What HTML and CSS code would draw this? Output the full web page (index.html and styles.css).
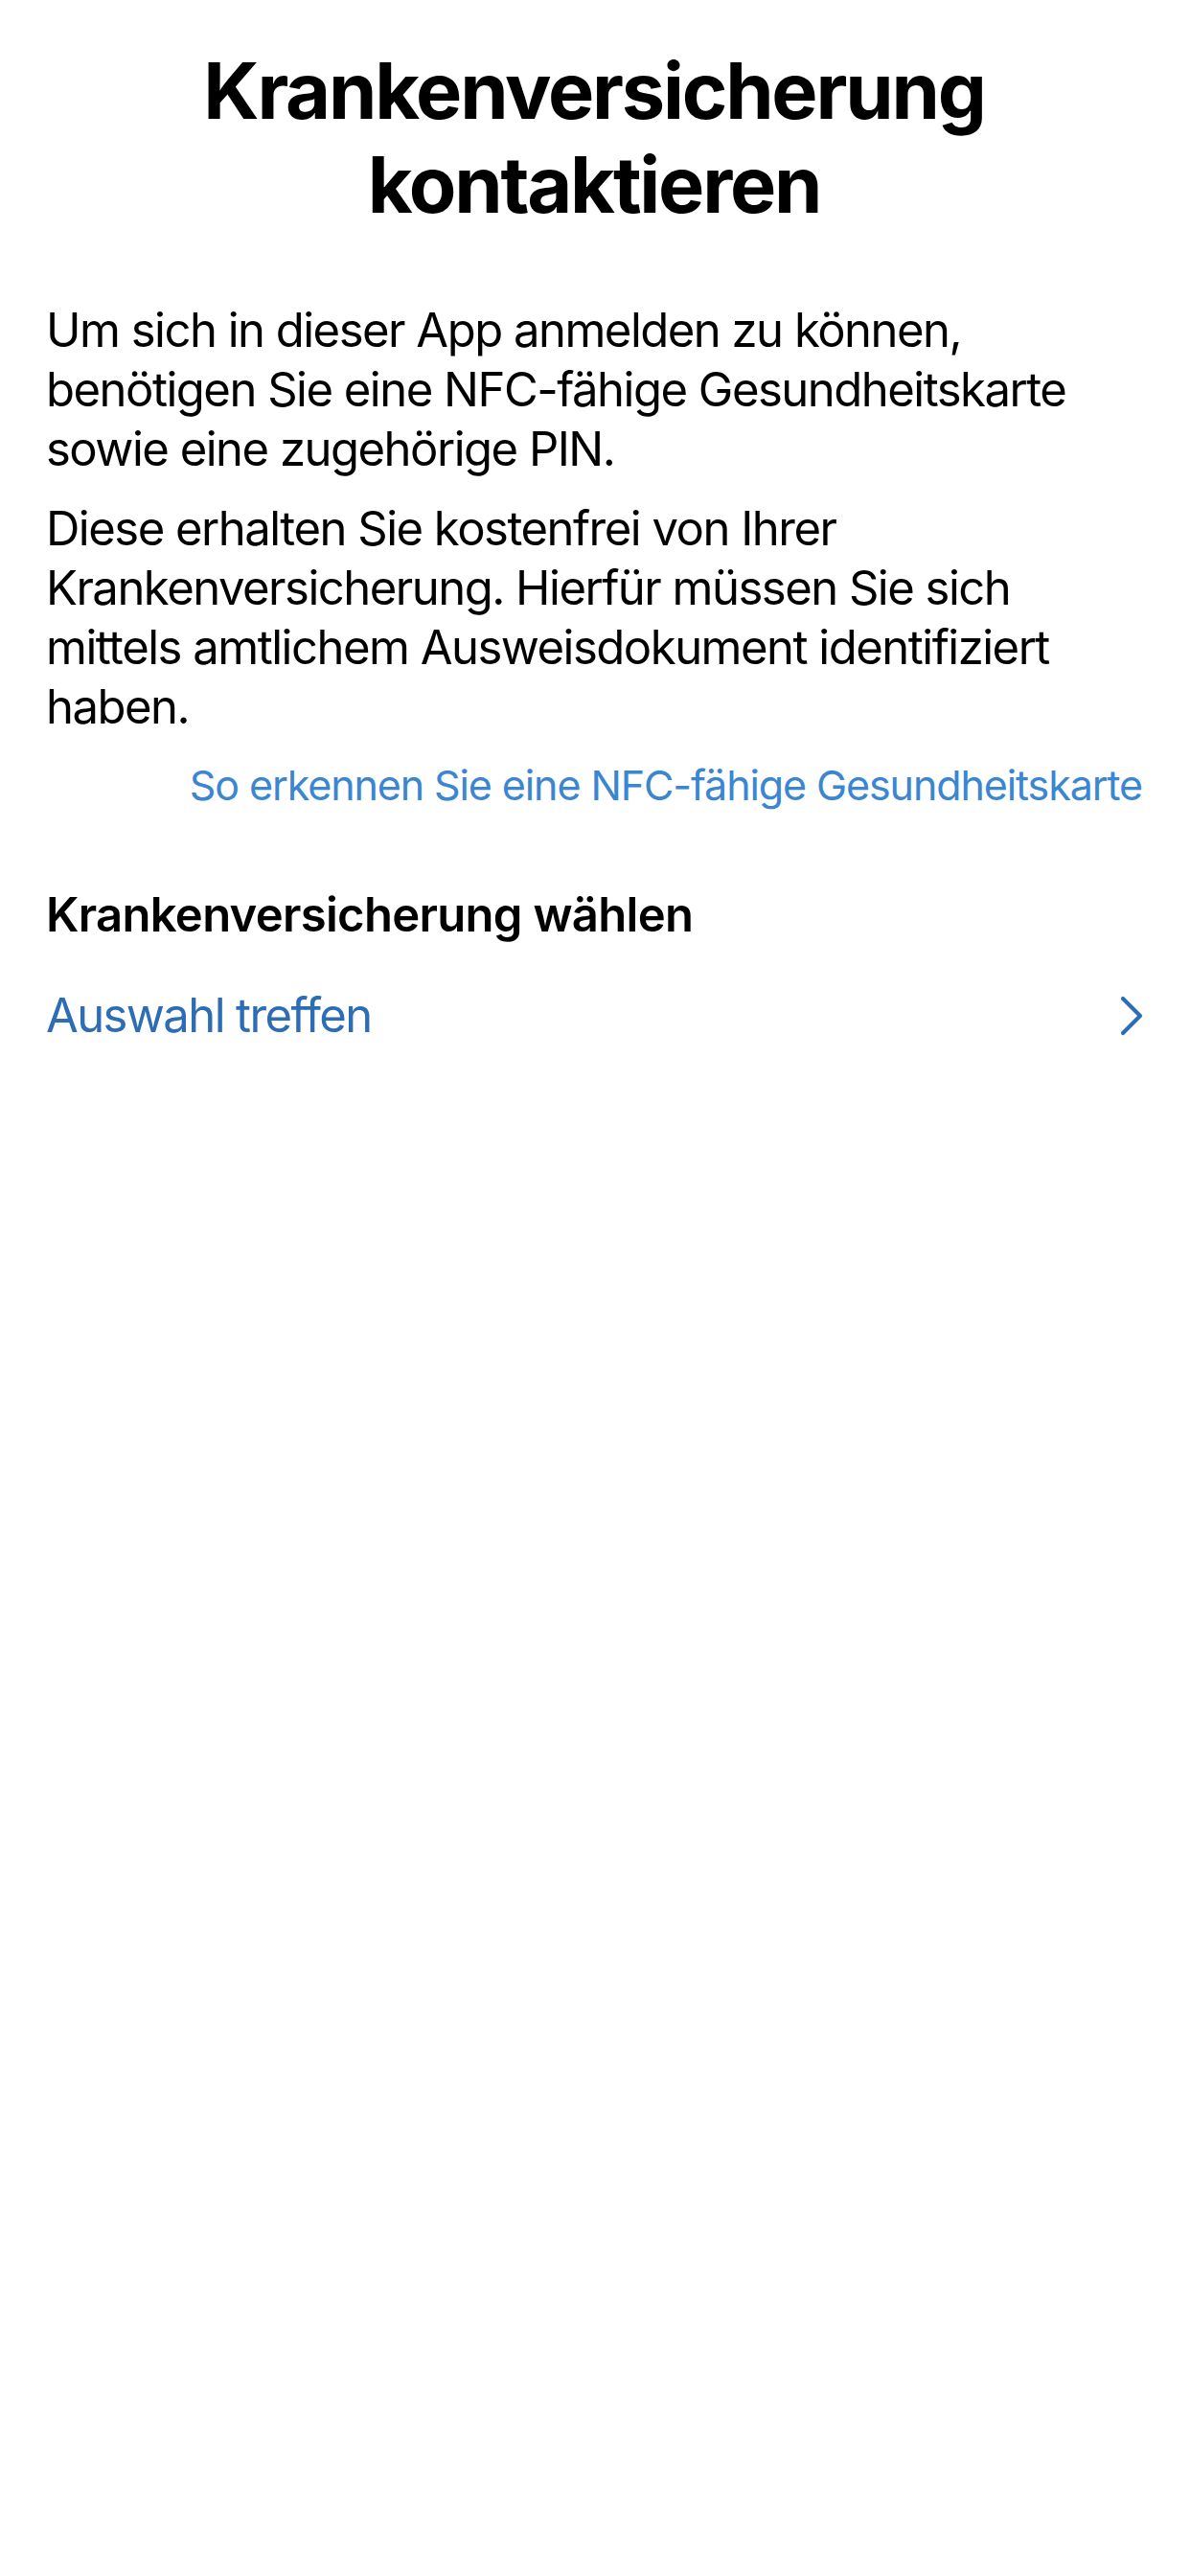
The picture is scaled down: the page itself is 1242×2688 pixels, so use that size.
FILE: index.html
```html
<!DOCTYPE html>
<html lang="de">
<head>
<meta charset="utf-8">
<title>Krankenversicherung kontaktieren</title>
<link rel="stylesheet" href="styles.css">
</head>
<body>
<main class="screen">
  <h1 class="title">Krankenversicherung kontaktieren</h1>
  <p class="body-text">Um sich in dieser App anmelden zu können, benötigen Sie eine NFC-fähige Gesundheitskarte sowie eine zugehörige PIN.</p>
  <p class="body-text body-text--second">Diese erhalten Sie kostenfrei von Ihrer Krankenversicherung. Hierfür müssen Sie sich mittels amtlichem Ausweisdokument identifiziert haben.</p>
  <div class="link-row"><a class="info-link" href="#">So erkennen Sie eine NFC-fähige Gesundheitskarte</a></div>
  <h2 class="section-title">Krankenversicherung wählen</h2>
  <a class="select-row" href="#">
    <span class="select-label">Auswahl treffen</span>
    <svg class="chevron" width="26" height="44" viewBox="0 0 26 44" aria-hidden="true"><path d="M4 4 L22 22 L4 40" fill="none" stroke="#2d6db5" stroke-width="4.2" stroke-linecap="round" stroke-linejoin="round"/></svg>
  </a>
</main>
</body>
</html>
```
FILE: styles.css
```css
html, body {
  margin: 0;
  padding: 0;
  background: #ffffff;
}
body {
  font-family: Inter, "Noto Sans", "Liberation Sans", sans-serif;
  color: #000000;
}
.screen {
  padding: 46px 50px 0 48px;
  display: flex;
  flex-direction: column;
}
.title {
  margin: 0 auto;
  max-width: 900px;
  font-size: 81px;
  line-height: 98px;
  font-weight: 700;
  text-align: center;
  letter-spacing: -2.2px;
}
.body-text {
  margin: 72px 0 0 0;
  font-size: 49px;
  line-height: 62px;
  font-weight: 400;
  letter-spacing: -1.5px;
}
.body-text--second {
  margin-top: 21px;
}
.link-row {
  margin-top: 20px;
  display: flex;
  justify-content: flex-end;
}
.info-link {
  font-size: 43px;
  line-height: 60px;
  color: #3a86d0;
  text-decoration: none;
  letter-spacing: -1.1px;
}
.section-title {
  margin: 75px 0 0 0;
  font-size: 49px;
  line-height: 62px;
  font-weight: 600;
  letter-spacing: -0.7px;
}
.select-row {
  margin-top: 43px;
  display: flex;
  align-items: center;
  justify-content: space-between;
  text-decoration: none;
  color: #2d6db5;
}
.select-label {
  font-size: 49px;
  line-height: 62px;
  letter-spacing: -1.6px;
}
.chevron {
  display: block;
  margin-right: -2px;
}
```
